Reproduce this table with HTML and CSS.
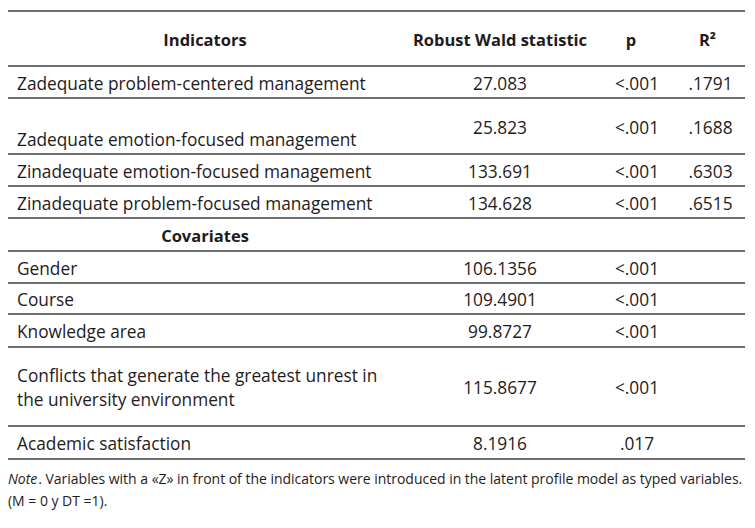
FILE: index.html
```html
<!DOCTYPE html>
<html lang="en">
<head>
<meta charset="utf-8">
<title>Robust Wald statistics</title>
<link rel="stylesheet" href="styles.css">
</head>
<body>
<table class="stats">
  <colgroup>
    <col class="c-ind"><col class="c-wald"><col class="c-p"><col class="c-r2">
  </colgroup>
  <thead>
    <tr class="r-head">
      <th class="t-center">Indicators</th>
      <th>Robust Wald statistic</th>
      <th class="h-p">p</th>
      <th class="h-r2">R²</th>
    </tr>
  </thead>
  <tbody>
    <tr class="r-32">
      <td class="t-left">Zadequate problem-centered management</td>
      <td>27.083</td><td>&lt;.001</td><td>.1791</td>
    </tr>
    <tr class="r-56">
      <td class="t-left t-bottom">Zadequate emotion-focused management</td>
      <td>25.823</td><td>&lt;.001</td><td>.1688</td>
    </tr>
    <tr class="r-32">
      <td class="t-left">Zinadequate emotion-focused management</td>
      <td>133.691</td><td>&lt;.001</td><td>.6303</td>
    </tr>
    <tr class="r-32">
      <td class="t-left">Zinadequate problem-focused management</td>
      <td>134.628</td><td>&lt;.001</td><td>.6515</td>
    </tr>
    <tr class="r-33">
      <td class="t-center t-bold">Covariates</td>
      <td></td><td></td><td></td>
    </tr>
    <tr class="r-32">
      <td class="t-left">Gender</td>
      <td>106.1356</td><td>&lt;.001</td><td></td>
    </tr>
    <tr class="r-31">
      <td class="t-left">Course</td>
      <td>109.4901</td><td>&lt;.001</td><td></td>
    </tr>
    <tr class="r-33">
      <td class="t-left">Knowledge area</td>
      <td>99.8727</td><td>&lt;.001</td><td></td>
    </tr>
    <tr class="r-79">
      <td class="t-left">Conflicts that generate the greatest unrest in<br>the university environment</td>
      <td>115.8677</td><td>&lt;.001</td><td></td>
    </tr>
    <tr class="r-33">
      <td class="t-left">Academic satisfaction</td>
      <td>8.1916</td><td>.017</td><td></td>
    </tr>
  </tbody>
</table>
<p class="note"><em class="note-label">Note</em>. Variables with a «Z» in front of the indicators were introduced in the latent profile model as typed variables. (M = 0 y DT =1).</p>
</body>
</html>
```

FILE: styles.css
```css
html, body {
  background: #ffffff;
}
body {
  margin: 8px;
  font-family: "Open Sans", "Liberation Sans", sans-serif;
  color: #1f1b1c;
}
.stats {
  width: 737px;
  margin-top: 2px;
  border-collapse: collapse;
  table-layout: fixed;
  font-size: 17.3px;
  line-height: 24px;
}
.c-ind { width: 394px; }
.c-wald { width: 196px; }
.c-p { width: 78px; }
.c-r2 { width: 69px; }

.stats tr {
  border-top: 2px solid #6e6e6e;
  border-bottom: 2px solid #6e6e6e;
}
.stats th,
.stats td {
  padding: 3px 0 0 0;
  text-align: center;
  vertical-align: middle;
  font-weight: 400;
}
.stats th {
  font-weight: 700;
  font-size: 16.5px;
  padding-top: 2px;
}
.stats th.h-p { padding-right: 12px; }
.stats th.h-r2 { padding-right: 6px; }

.r-head { height: 55px; }
.r-31 { height: 31px; }
.r-32 { height: 32px; }
.r-33 { height: 33px; }
.r-56 { height: 56px; }
.r-79 { height: 79px; }

.stats td.t-left {
  text-align: left;
  padding-left: 9px;
}
.stats .t-center { text-align: center; }
.stats td.t-bold {
  font-weight: 700;
  font-size: 16.5px;
}
.stats td.t-bottom {
  vertical-align: bottom;
  padding-bottom: 1px;
}

.note {
  margin: 8px 0 0 0;
  font-size: 14px;
  line-height: 22px;
  letter-spacing: -0.02px;
}
.note-label {
  display: inline-block;
  padding-right: 1px;
}
```
